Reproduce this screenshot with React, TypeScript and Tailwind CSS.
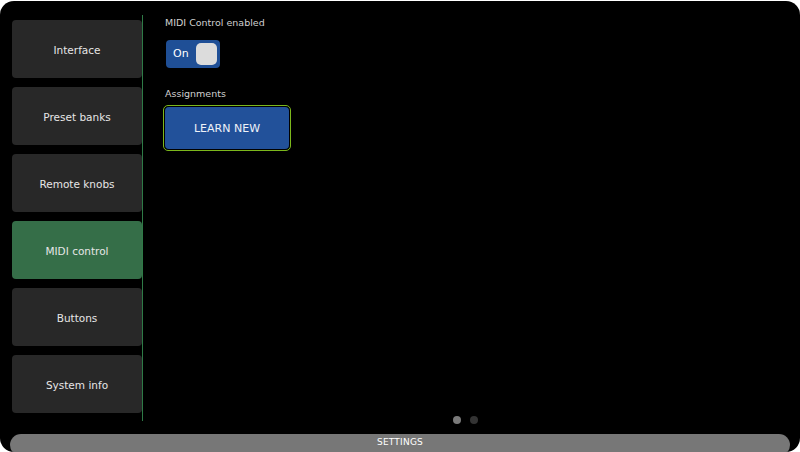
const tabs = ['Interface', 'Preset banks', 'Remote knobs', 'MIDI control', 'Buttons', 'System info'];

export default function App() {
  return (
    <div className="w-[800px] h-[452px] bg-white overflow-hidden font-['DejaVu_Sans',sans-serif]">
      <div className="w-full h-full pt-px">
        <div className="w-full h-full bg-black rounded-[14px] flex flex-col overflow-hidden">
          <div className="flex-1 flex">
            {/* sidebar */}
            <div className="ml-3 mt-[14px] h-[406px] w-[131px] border-r border-[#2e7a46] pt-[5px] flex flex-col gap-[9px]">
              {tabs.map((t) => (
                <div
                  key={t}
                  className={`h-[58px] w-[130px] rounded-[4px] flex items-center justify-center pt-[3px] text-[10.5px] text-[#e6e6e6] ${
                    t === 'MIDI control' ? 'bg-[#356e48]' : 'bg-[#282828]'
                  }`}
                >
                  {t}
                </div>
              ))}
            </div>

            {/* content */}
            <div className="flex-1 flex flex-col">
              <div className="pl-[22px] pt-[15px] flex flex-col items-start">
                <div className="text-[9.5px] text-[#d0d0d0] leading-[14px]">MIDI Control enabled</div>
                <div className="mt-[10px] ml-px h-[28px] w-[54px] rounded-[4px] bg-[#1f4f96] flex items-center justify-between pl-[7px] pr-[3px]">
                  <span className="text-[11px] text-white">On</span>
                  <span className="h-[22px] w-[21px] rounded-[5px] bg-[#dcdcdc]" />
                </div>
                <div className="mt-[19px] text-[9.5px] text-[#d0d0d0] leading-[14px]">Assignments</div>
                <div className="mt-[4px] -ml-[2px] rounded-[5px] border border-[#7cb81c] p-px bg-black">
                  <div className="h-[42px] w-[124px] rounded-[4px] bg-[#22519a] flex items-center justify-center pt-[3px] text-[11px] text-[#eef2f8]">
                    LEARN NEW
                  </div>
                </div>
              </div>
              <div className="mt-auto mr-[12px] pb-[10px] flex justify-center gap-[9px]">
                <span className="h-[8px] w-[8px] rounded-full bg-[#7a7a7a]" />
                <span className="h-[8px] w-[8px] rounded-full bg-[#333333]" />
              </div>
            </div>
          </div>

          {/* bottom bar */}
          <div className="mx-[10px] h-[18px] -mb-[4px] box-content pb-[4px] rounded-full bg-[#777777] flex items-center justify-center text-[9px] text-white tracking-wide">
            SETTINGS
          </div>
        </div>
      </div>
    </div>
  );
}
